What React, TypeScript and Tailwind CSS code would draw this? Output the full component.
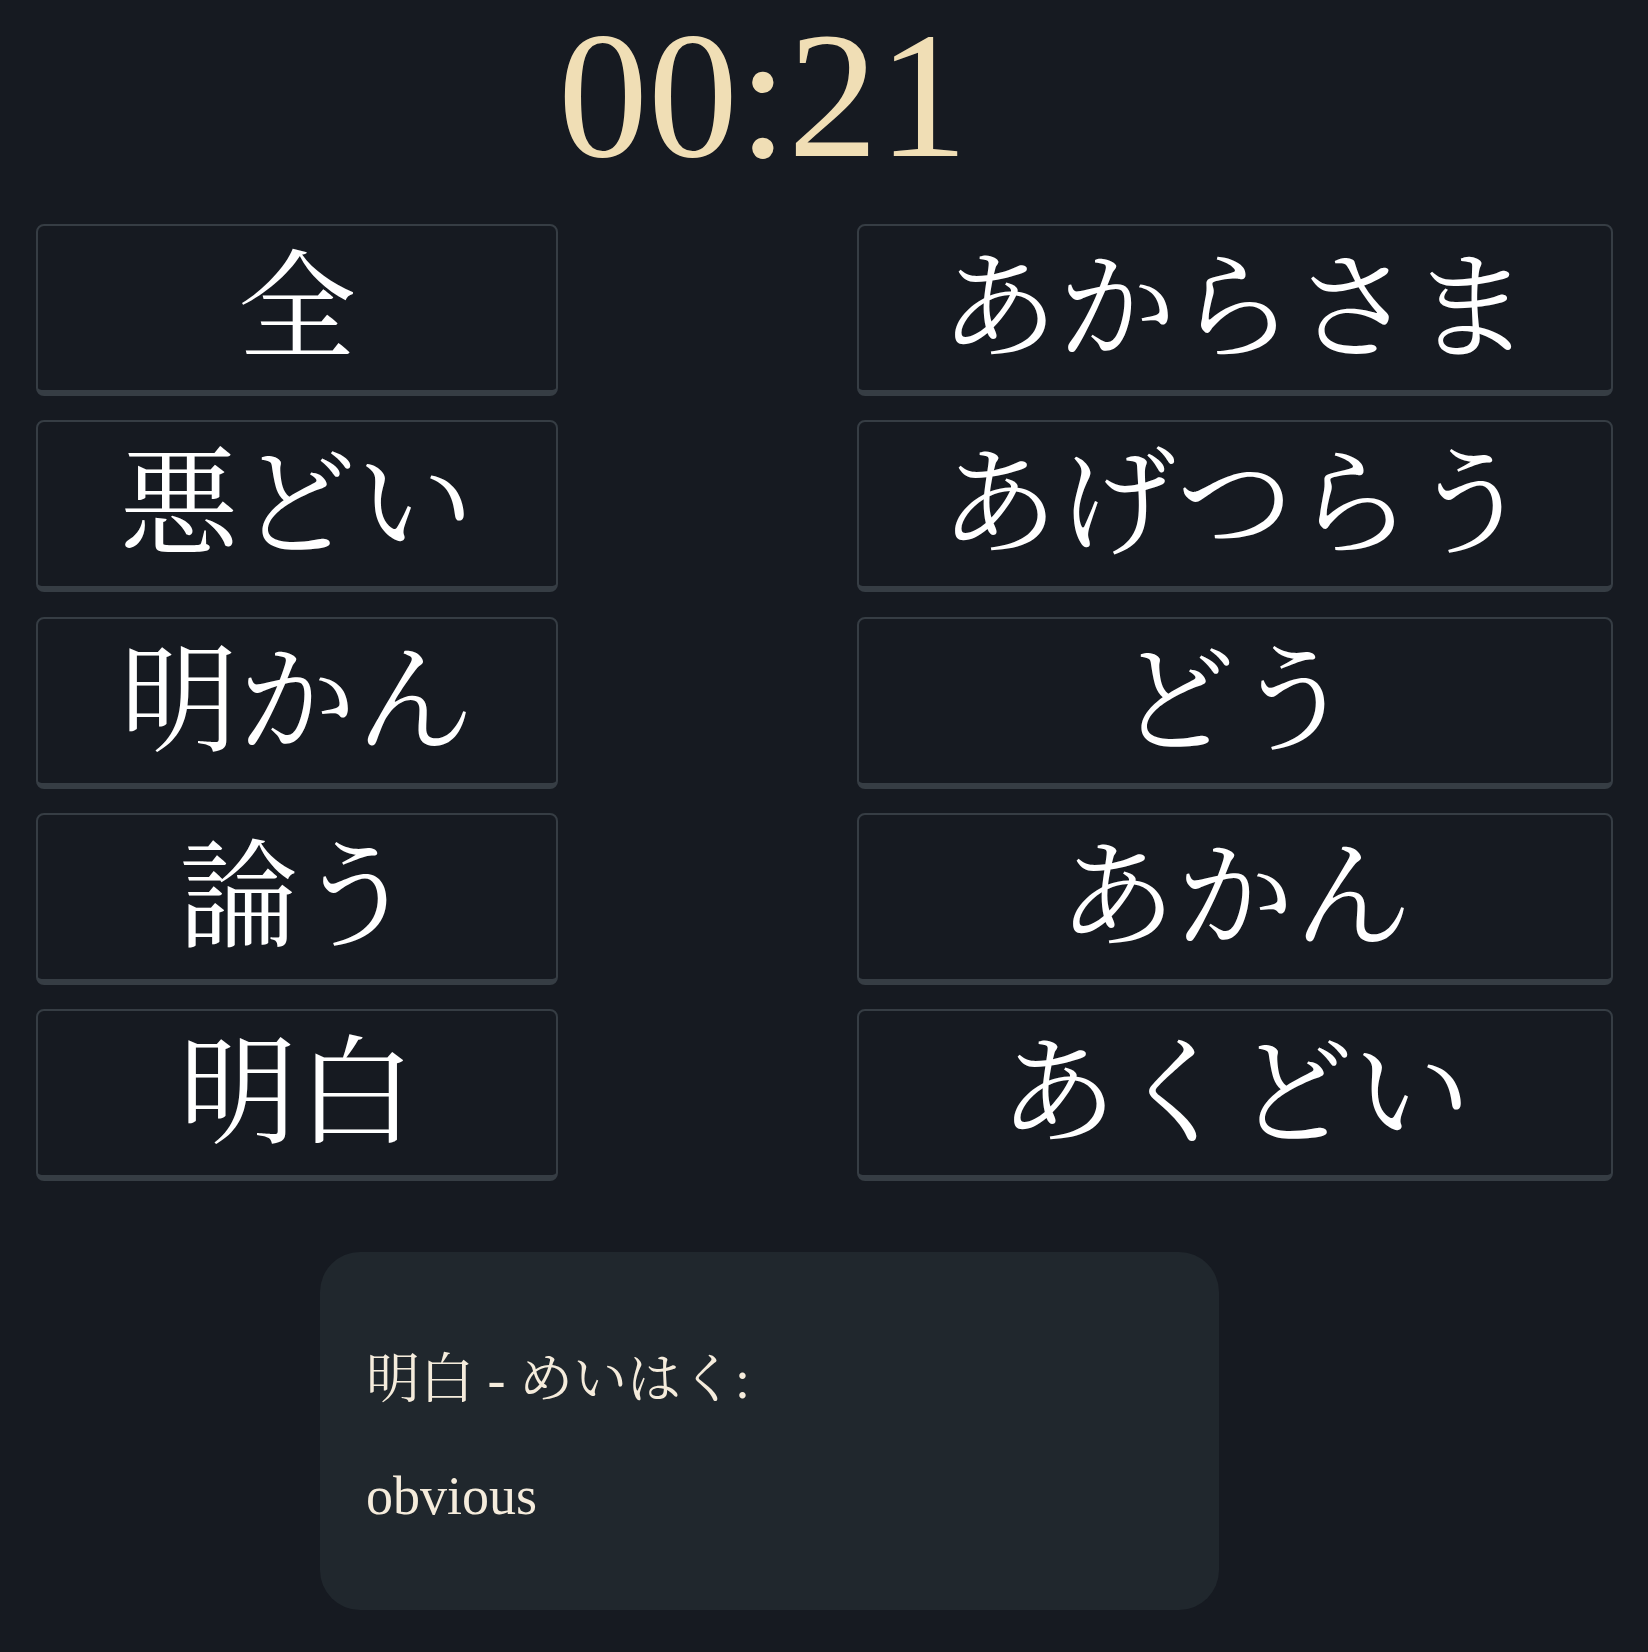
const leftWords = ["全", "悪どい", "明かん", "論う", "明白"];
const rightWords = ["あからさま", "あげつらう", "どう", "あかん", "あくどい"];

function WordButton({ word, wide }: { word: string; wide?: boolean }) {
  return (
    <button
      className={
        "flex h-[172px] items-center justify-center rounded-lg border-2 border-b-[6px] border-[#363d44] bg-[#161a21] pb-[20px] text-[118px] leading-none text-white " +
        (wide ? "w-[756px]" : "w-[522px]")
      }
      style={{ fontFamily: '"Noto Serif CJK JP", "Noto Sans CJK JP", serif' }}
    >
      {word}
    </button>
  );
}

export default function App() {
  return (
    <div
      className="min-h-[1652px] bg-[#161a21]"
      style={{ fontFamily: '"Liberation Serif", "Noto Serif CJK JP", "Noto Sans CJK JP", serif' }}
    >
      <div className="pl-[558px] text-[180px] leading-[192px] text-[#f0deb5]">00:21</div>

      <div className="mt-[32px] flex gap-[299px] pl-9">
        <div className="flex flex-col gap-[24.25px]">
          {leftWords.map((w) => (
            <WordButton key={w} word={w} />
          ))}
        </div>
        <div className="flex flex-col gap-[24.25px]">
          {rightWords.map((w) => (
            <WordButton key={w} word={w} wide />
          ))}
        </div>
      </div>

      <div className="ml-[320px] mt-[71px] flex w-[899px] flex-col gap-[54px] rounded-[40px] bg-[#20272d] pb-[83px] pl-[46px] pt-[97px] text-[54px] leading-[62px] text-[#f5ecdc]">
        <p>明白 - めいはく:</p>
        <p>obvious</p>
      </div>
    </div>
  );
}
